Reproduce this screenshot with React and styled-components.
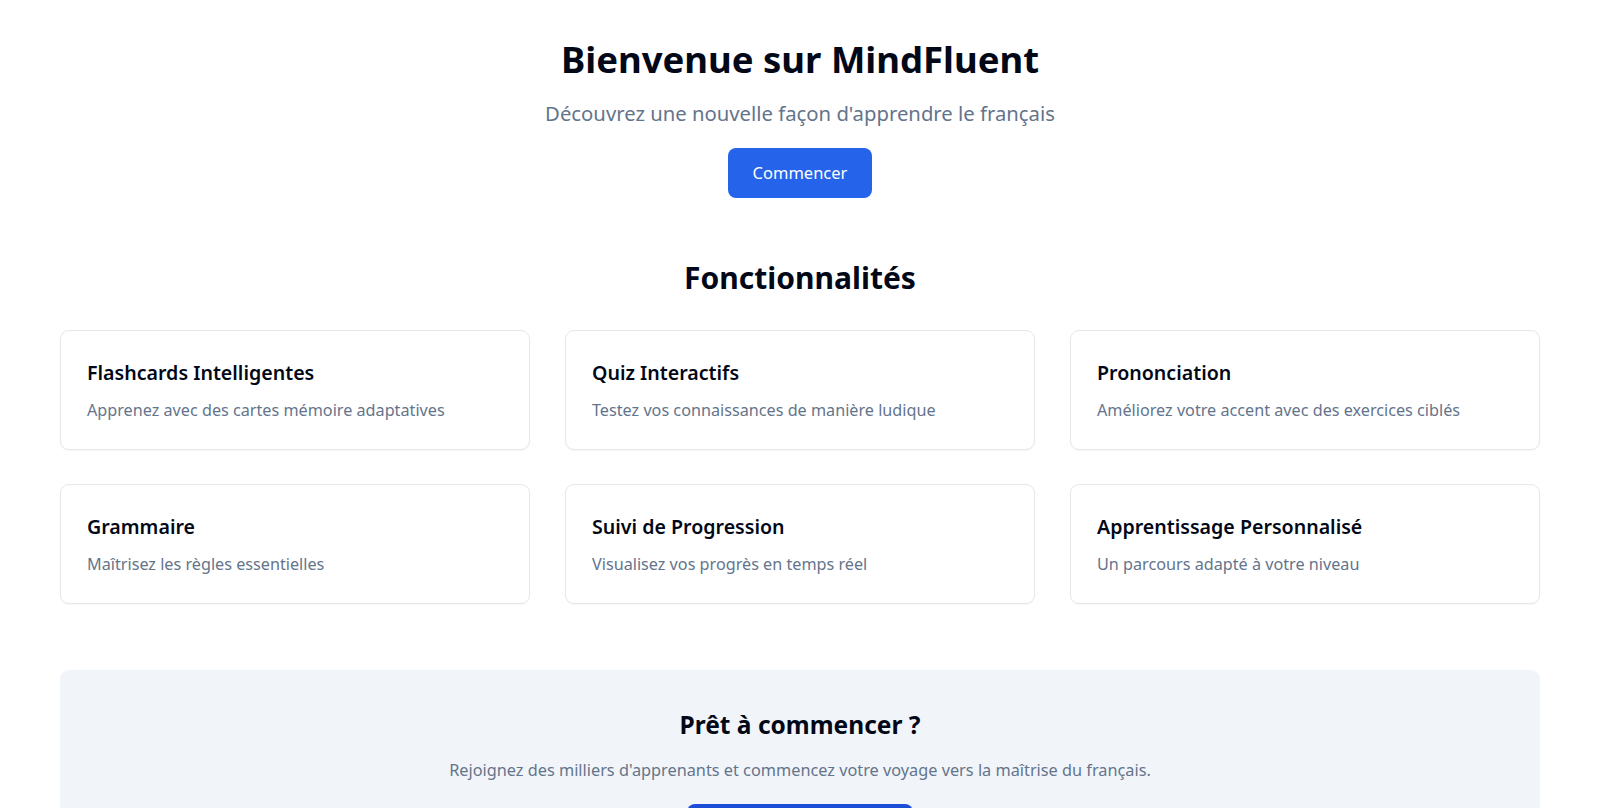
import styled, { createGlobalStyle } from "styled-components";

const GlobalStyle = createGlobalStyle`
    body {
        margin: 0;
        background: #ffffff;
        font-family: "Noto Sans", "Open Sans", sans-serif;
        color: #020817;
    }
    * { box-sizing: border-box; }
`;

const features = [
    { title: "Flashcards Intelligentes", text: "Apprenez avec des cartes mémoire adaptatives" },
    { title: "Quiz Interactifs", text: "Testez vos connaissances de manière ludique" },
    { title: "Prononciation", text: "Améliorez votre accent avec des exercices ciblés" },
    { title: "Grammaire", text: "Maîtrisez les règles essentielles" },
    { title: "Suivi de Progression", text: "Visualisez vos progrès en temps réel" },
    { title: "Apprentissage Personnalisé", text: "Un parcours adapté à votre niveau" },
];

const App = () => {
    return <Page>
            <GlobalStyle/>
            <Hero>
                <Title>Bienvenue sur MindFluent</Title>
                <Subtitle>Découvrez une nouvelle façon d'apprendre le français</Subtitle>
                <Button>Commencer</Button>
            </Hero>
            <Features>
                <SectionTitle>Fonctionnalités</SectionTitle>
                <Grid>
                    {features.map((f) => (
                        <Card key={f.title}>
                            <CardTitle>{f.title}</CardTitle>
                            <CardText>{f.text}</CardText>
                        </Card>
                    ))}
                </Grid>
            </Features>
            <Cta>
                <CtaTitle>Prêt à commencer ?</CtaTitle>
                <CtaText>Rejoignez des milliers d'apprenants et commencez votre voyage vers la maîtrise du français.</CtaText>
                <Button $dark>S'inscrire gratuitement</Button>
            </Cta>
        </Page>
}

const Page = styled.main`
    padding: 37px 60px 40px;
`;

const Hero = styled.section`
    display: flex;
    flex-direction: column;
    align-items: center;
    text-align: center;
`;

const Title = styled.h1`
    margin: 0 0 17px;
    font-size: 36.5px;
    line-height: 44px;
    font-weight: 700;
    color: #020817;
`;

const Subtitle = styled.p`
    margin: 0 0 19px;
    font-size: 20.3px;
    line-height: 31px;
    color: #64748b;
`;

const Button = styled.button`
    border: none;
    border-radius: 8px;
    padding: 13px 25px;
    font-family: inherit;
    font-size: 16.5px;
    line-height: 24px;
    color: #ffffff;
    background: ${(p) => (p.$dark ? "#1d4ed8" : "#2563eb")};
    cursor: pointer;
`;

const Features = styled.section`
    margin-top: 60px;
`;

const SectionTitle = styled.h2`
    margin: 0 0 32px;
    text-align: center;
    font-size: 30px;
    line-height: 40px;
    font-weight: 700;
    color: #020817;
`;

const Grid = styled.div`
    display: grid;
    grid-template-columns: repeat(3, 1fr);
    column-gap: 35px;
    row-gap: 34px;
`;

const Card = styled.div`
    background: #ffffff;
    border: 1px solid #e5e7eb;
    border-radius: 9px;
    padding: 26px 26px 26px;
    box-shadow: 0 1px 2px rgba(0, 0, 0, 0.04);
`;

const CardTitle = styled.h3`
    margin: 0 0 9px;
    font-size: 19.6px;
    line-height: 31px;
    font-weight: 600;
    color: #020817;
`;

const CardText = styled.p`
    margin: 0;
    font-size: 16.2px;
    line-height: 26px;
    color: #64748b;
`;

const Cta = styled.section`
    margin-top: 66px;
    background: #f1f5f9;
    border-radius: 9px;
    padding: 37px 35px;
    display: flex;
    flex-direction: column;
    align-items: center;
    text-align: center;
`;

const CtaTitle = styled.h2`
    margin: 0 0 15px;
    font-size: 24.5px;
    line-height: 35px;
    font-weight: 700;
    color: #020817;
`;

const CtaText = styled.p`
    margin: 0 0 21px;
    font-size: 16.3px;
    line-height: 26px;
    color: #64748b;
`;

export default App;
